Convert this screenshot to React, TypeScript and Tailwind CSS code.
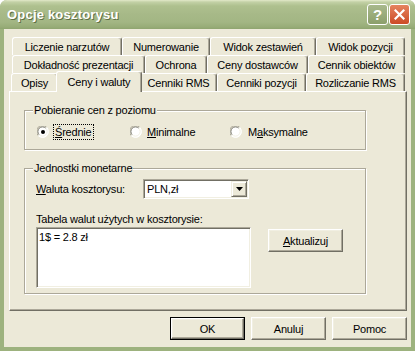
import React from "react";

function Tab({ label, w, selected }: { label: string; w: string; selected?: boolean }) {
  if (selected) {
    return (
      <div
        className={`${w} h-[21px] -mx-[2px] -mb-[1px] relative z-10 flex justify-center pt-[3px] bg-[#ECE9D8] border-l border-t border-r border-l-white border-t-white border-r-[#716F64] rounded-t-[3px] shadow-[inset_-1px_0_0_#ACA899] whitespace-nowrap`}
      >
        {label}
      </div>
    );
  }
  return (
    <div
      className={`${w} h-[18px] flex items-center justify-center bg-[#ECE9D8] border-l border-t border-r border-l-white border-t-white border-r-[#716F64] rounded-t-[3px] shadow-[inset_-1px_0_0_#ACA899] whitespace-nowrap`}
    >
      {label}
    </div>
  );
}

function Radio({ checked }: { checked?: boolean }) {
  return (
    <svg width="12" height="12" viewBox="0 0 12 12" className="shrink-0">
      <circle cx="6" cy="6" r="5.5" fill="#fff" />
      <path d="M1.2 9.6 A5.5 5.5 0 0 1 9.6 1.2" stroke="#ACA899" strokeWidth="1" fill="none" />
      <path d="M2.2 8.8 A4.5 4.5 0 0 1 8.8 2.2" stroke="#716F64" strokeWidth="1" fill="none" />
      <path d="M9.6 1.2 A5.5 5.5 0 0 1 1.2 9.6" stroke="#fff" strokeWidth="1" fill="none" />
      <path d="M8.8 2.2 A4.5 4.5 0 0 1 2.2 8.8" stroke="#F1EFE2" strokeWidth="1" fill="none" />
      {checked && <circle cx="6" cy="6" r="2" fill="#000" />}
    </svg>
  );
}

function Btn({ children, def }: { children: React.ReactNode; def?: boolean }) {
  const inner = (
    <div className="w-full h-full flex items-center justify-center bg-[#ECE9D8] border border-t-white border-l-white border-r-[#716F64] border-b-[#716F64] shadow-[inset_-1px_-1px_0_#ACA899,inset_1px_1px_0_#F1EFE2]">
      {children}
    </div>
  );
  if (def) {
    return <div className="w-[75px] h-[23px] border border-black">{inner}</div>;
  }
  return <div className="w-[75px] h-[23px]">{inner}</div>;
}

export default function App() {
  return (
    <div className="w-[415px] h-[351px] flex flex-col bg-[#9DB27E] rounded-t-[7px] overflow-hidden font-['Liberation_Sans',Arial,sans-serif] text-[11px] tracking-[-0.2px] text-black leading-[14px]">
      {/* Title bar */}
      <div className="h-[29px] shrink-0 flex items-center pl-[7px] pr-[5px] bg-[linear-gradient(to_bottom,#e2e9c9_0px,#c3d1a6_2px,#aec08e_6px,#a7b988_14px,#a3b684_22px,#97ac77_27px,#8ea46f_29px)]">
        <div className="flex-1 text-white font-bold text-[13px] tracking-[0.2px] [text-shadow:1px_1px_0_#5f7046]">
          Opcje kosztorysu
        </div>
        <div className="flex gap-[1px]">
          <div className="w-[21px] h-[21px] rounded-[3px] border border-white bg-[linear-gradient(to_bottom,#a9b98c,#8c9f6b)] flex items-center justify-center text-white font-bold text-[15px]">
            ?
          </div>
          <div className="w-[21px] h-[21px] rounded-[3px] border border-white bg-[linear-gradient(to_bottom,#e5835f,#cc4b26)] flex items-center justify-center">
            <svg width="11" height="11" viewBox="0 0 11 11">
              <path d="M1.5 1.5 L9.5 9.5 M9.5 1.5 L1.5 9.5" stroke="#fff" strokeWidth="2.2" strokeLinecap="square" />
            </svg>
          </div>
        </div>
      </div>

      {/* Body */}
      <div className="flex-1 mx-[4px] mb-[4px] bg-[#ECE9D8] flex flex-col pt-[8px] pl-[5px] pr-[4px]">
        {/* Tabs */}
        <div className="flex flex-col">
          <div className="flex ml-[3px]">
            <Tab label="Liczenie narzutów" w="w-[110px]" />
            <Tab label="Numerowanie" w="w-[88px]" />
            <Tab label="Widok zestawień" w="w-[106px]" />
            <Tab label="Widok pozycji" w="w-[89px]" />
          </div>
          <div className="flex ml-[3px]">
            <Tab label="Dokładność prezentacji" w="w-[133px]" />
            <Tab label="Ochrona" w="w-[62px]" />
            <Tab label="Ceny dostawców" w="w-[101px]" />
            <Tab label="Cennik obiektów" w="w-[97px]" />
          </div>
          <div className="flex items-end h-[18px] ml-[2px]">
            <Tab label="Opisy" w="w-[47px]" />
            <Tab label="Ceny i waluty" w="w-[86px]" selected />
            <Tab label="Cenniki RMS" w="w-[77px]" />
            <Tab label="Cenniki pozycji" w="w-[89px]" />
            <Tab label="Rozliczanie RMS" w="w-[99px]" />
          </div>
        </div>

        {/* Panel */}
        <div className="h-[220px] border border-t-white border-l-white border-r-[#716F64] border-b-[#716F64] shadow-[inset_-1px_-1px_0_#ACA899] pl-[14px] pt-[18px] flex flex-col">
          {/* Group 1 */}
          <div className="relative w-[342px] h-[40px] border border-[#ACA899] shadow-[inset_1px_1px_0_#fff,1px_1px_0_#fff] flex items-center pl-[12px] pt-[4px]">
            <div className="absolute left-[8px] -top-[8px] px-[1px] bg-[#ECE9D8]">Pobieranie cen z poziomu</div>
            <div className="w-[93px] flex items-center">
              <Radio checked />
              <span className="ml-[4px] px-[1px] border border-dotted border-black">
                <span className="underline">Ś</span>rednie
              </span>
            </div>
            <div className="w-[100px] flex items-center">
              <Radio />
              <span className="ml-[5px]">
                <span className="underline">M</span>inimalne
              </span>
            </div>
            <div className="flex items-center">
              <Radio />
              <span className="ml-[6px]">
                M<span className="underline">a</span>ksymalne
              </span>
            </div>
          </div>

          {/* Group 2 */}
          <div className="relative mt-[18px] w-[342px] h-[126px] border border-[#ACA899] shadow-[inset_1px_1px_0_#fff,1px_1px_0_#fff] pl-[11px] pt-[10px] flex flex-col">
            <div className="absolute left-[8px] -top-[8px] px-[1px] bg-[#ECE9D8]">Jednostki monetarne</div>
            <div className="flex items-center h-[20px]">
              <div className="w-[107px]">
                <span className="underline">W</span>aluta kosztorysu:
              </div>
              <div className="w-[106px] h-[20px] bg-white border border-t-[#ACA899] border-l-[#ACA899] border-r-white border-b-white shadow-[inset_1px_1px_0_#716F64,inset_-1px_-1px_0_#F1EFE2] flex items-center pl-[3px]">
                <span className="flex-1">PLN,zł</span>
                <div className="w-[16px] h-[16px] mr-[1px] bg-[#ECE9D8] border border-t-[#F1EFE2] border-l-[#F1EFE2] border-r-[#716F64] border-b-[#716F64] shadow-[inset_1px_1px_0_#fff,inset_-1px_-1px_0_#ACA899] flex items-center justify-center">
                  <svg width="7" height="4" viewBox="0 0 7 4">
                    <path d="M0 0 H7 L3.5 4 Z" fill="#000" />
                  </svg>
                </div>
              </div>
            </div>
            <div className="mt-[13px]">Tabela walut użytych w kosztorysie:</div>
            <div className="flex mt-[1px]">
              <div className="w-[215px] h-[61px] bg-white border border-t-[#ACA899] border-l-[#ACA899] border-r-white border-b-white shadow-[inset_1px_1px_0_#716F64,inset_-1px_-1px_0_#F1EFE2] pl-[2px] pt-[2px]">
                1$ = 2.8 zł
              </div>
              <div className="ml-[17px] mt-[2px]">
                <Btn>
                  <span className="underline">A</span>ktualizuj
                </Btn>
              </div>
            </div>
          </div>
        </div>

        {/* Bottom buttons */}
        <div className="flex justify-end gap-[6px] mt-[6px]">
          <Btn def>OK</Btn>
          <Btn>Anuluj</Btn>
          <Btn>Pomoc</Btn>
        </div>
      </div>
    </div>
  );
}
